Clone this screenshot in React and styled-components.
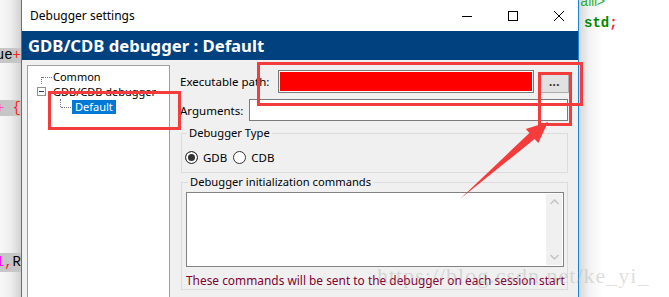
import React from 'react';
import styled, { createGlobalStyle } from 'styled-components';

const GlobalStyle = createGlobalStyle`
  html, body {
    margin: 0;
    padding: 0;
    background: #fff;
    overflow: hidden;
  }
  body {
    font-family: "Noto Sans", "Liberation Sans", sans-serif;
    color: #000;
  }
`;

const Screen = styled.div`
  position: relative;
  display: flex;
  width: 669px;
  height: 297px;
  overflow: hidden;
  background: #fff;
`;

/* editor behind the dialog */
const EditorStrip = styled.div`
  flex: none;
  width: ${p => p.$width}px;
  display: flex;
  flex-direction: column;
  overflow: hidden;
  font-family: "Liberation Mono", monospace;
  font-size: 14px;
  background: ${p => (p.$side === 'left'
    ? 'linear-gradient(to right, #f8f8f8 0%, #eeeeee 50%, #d2d2d2 100%)'
    : 'linear-gradient(to right, #d8d8d8 0px, #f2f2f2 10px, #fff 24px)')};
`;

const CodeLine = styled.div`
  flex: none;
  display: flex;
  justify-content: ${p => (p.$side === 'left' ? 'flex-end' : 'flex-start')};
  margin-top: ${p => p.$top}px;
  height: ${p => p.$h}px;
  line-height: ${p => p.$h}px;
  padding-left: ${p => p.$indent || 0}px;
  white-space: pre;
  overflow: hidden;
  background: ${p => (p.$marked ? '#c6c6c6' : 'transparent')};
`;

const Tok = styled.span`
  color: ${p => p.$c || '#000'};
  font-weight: ${p => (p.$bold ? 700 : 400)};
`;

/* dialog */
const Window = styled.div`
  flex: none;
  width: 558px;
  box-sizing: border-box;
  border-left: 1px solid #1883d7;
  border-right: 1px solid #1883d7;
  display: flex;
  flex-direction: column;
  background: #f0f0f0;
  overflow: hidden;
`;

const TitleBar = styled.div`
  flex: none;
  height: 31px;
  display: flex;
  align-items: center;
  background: #fff;
  padding-left: 8px;
`;

const TitleText = styled.div`
  flex: 1;
  font-size: 12px;
`;

const Controls = styled.div`
  display: flex;
  height: 100%;
  margin-right: -4px;
`;

const ControlButton = styled.div`
  width: 46px;
  height: 100%;
  display: flex;
  align-items: center;
  justify-content: center;
`;

const Header = styled.div`
  flex: none;
  height: 29px;
  display: flex;
  align-items: center;
  padding-left: 6px;
  background: #01417f;
  color: #fff;
  font-size: 16.7px;
  font-weight: 700;
`;

const Body = styled.div`
  flex: 1;
  display: flex;
  padding: 5px 10px 0 5px;
  min-height: 0;
`;

const TreePanel = styled.div`
  flex: none;
  width: 143px;
  box-sizing: border-box;
  margin-bottom: -6px;
  border: 1px solid #a0a0a0;
  background: #fff;
  padding: 3px 0 0 9px;
  font-size: 11px;
`;

const TreeRow = styled.div`
  display: flex;
  align-items: center;
  height: 15px;
  padding-left: ${p => p.$indent || 0}px;
`;

const Branch = styled.span`
  position: relative;
  flex: none;
  width: 16px;
  align-self: stretch;

  &::before {
    content: '';
    position: absolute;
    left: 4px;
    top: ${p => (p.$up ? '0' : '50%')};
    height: 50%;
    border-left: 1px dotted #777;
  }
  &::after {
    content: '';
    position: absolute;
    left: 5px;
    top: 50%;
    width: 10px;
    border-top: 1px dotted #777;
  }
`;

const ExpandBox = styled.span`
  flex: none;
  width: 9px;
  height: 9px;
  box-sizing: border-box;
  border: 1px solid #919191;
  display: flex;
  align-items: center;
  justify-content: center;
  margin-right: 7px;

  &::after {
    content: '';
    width: 5px;
    height: 1px;
    background: #1c3a7a;
  }
`;

const TreeLabel = styled.span`
  line-height: 14px;
  padding: 0 ${p => (p.$selected ? 3 : 0)}px;
  background: ${p => (p.$selected ? '#0078d7' : 'transparent')};
  color: ${p => (p.$selected ? '#fff' : '#000')};
`;

const Form = styled.div`
  flex: 1;
  margin-left: 10px;
  padding-top: 5px;
  display: flex;
  flex-direction: column;
  font-size: 11.5px;
`;

const FieldRow = styled.div`
  display: flex;
  align-items: center;
  height: ${p => p.$h}px;
  margin-top: ${p => p.$top || 0}px;
`;

const Label = styled.span`
  flex: none;
  width: ${p => p.$w}px;
`;

const TextInput = styled.div`
  flex: none;
  width: ${p => p.$w}px;
  height: 100%;
  box-sizing: border-box;
  border: 1px solid #7a7a7a;
  background: ${p => p.$fill || '#fff'};
  box-shadow: inset 0 0 0 1px #fff;
`;

const BrowseButton = styled.div`
  flex: none;
  align-self: flex-end;
  width: 29px;
  height: 21px;
  margin-left: 6px;
  box-sizing: border-box;
  border: 1px solid #adadad;
  background: #e1e1e1;
  display: flex;
  align-items: center;
  justify-content: center;
  font-weight: 700;
  letter-spacing: 0.5px;
  color: #3a2a10;
  padding-bottom: 3px;
`;

const Group = styled.fieldset`
  width: 387px;
  box-sizing: border-box;
  margin: ${p => p.$top}px 0 0 1px;
  padding: ${p => p.$pad};
  border: 1px solid #dcdcdc;
  min-inline-size: 0;
`;

const Legend = styled.legend`
  padding: 0 2px;
  margin-left: 2px;
  line-height: 14px;
  font-size: 11.2px;
`;

const RadioRow = styled.div`
  display: flex;
  align-items: center;
  height: 14px;
`;

const Radio = styled.span`
  flex: none;
  width: 13px;
  height: 13px;
  box-sizing: border-box;
  border-radius: 50%;
  border: 1px solid #333;
  background: ${p => (p.$checked ? '#333' : '#fff')};
  box-shadow: inset 0 0 0 2px #fff;
`;

const RadioText = styled.span`
  margin: 0 6px 0 5px;
`;

const CommandBox = styled.div`
  display: flex;
  width: 378px;
  height: 75px;
  box-sizing: border-box;
  border: 1px solid #828282;
  background: #fff;
  padding: 1px;
`;

const Scrollbar = styled.div`
  margin-left: auto;
  width: 16px;
  background: #f0f0f0;
  display: flex;
  flex-direction: column;
  align-items: center;
  justify-content: space-between;
  padding: 5px 0;
`;

const Hint = styled.div`
  margin-top: 6px;
  line-height: 14px;
  font-size: 11.9px;
  color: #800030;
  white-space: nowrap;
`;

/* annotations drawn over the screenshot */
const Overlay = styled.svg`
  position: absolute;
  left: 0;
  top: 0;
  pointer-events: none;
`;

const Watermark = styled.div`
  position: absolute;
  left: 377px;
  top: 263px;
  font-family: "Liberation Serif", serif;
  font-size: 22px;
  letter-spacing: 1px;
  color: rgba(160, 160, 160, 0.35);
  white-space: nowrap;
  pointer-events: none;
`;

const Chevron = ({ up }) => (
  <svg width="9" height="6" viewBox="0 0 9 6">
    <path d={up ? 'M0.5 5 L4.5 1 L8.5 5' : 'M0.5 1 L4.5 5 L8.5 1'} fill="none" stroke="#c2c2c2" strokeWidth="1.4" />
  </svg>
);

const App = () => {
  return (
    <Screen>
      <GlobalStyle />

      <EditorStrip $side="left" $width={21}>
        <CodeLine $side="left" $marked $top={48} $h={15}>
          <Tok>ue</Tok><Tok $c="#ff2020">+</Tok>
        </CodeLine>
        <CodeLine $side="left" $marked $top={37} $h={16}>
          <Tok $c="#ff55cc">+</Tok><Tok> </Tok><Tok $c="#ff2020">{'{'}</Tok>
        </CodeLine>
        <CodeLine $side="left" $marked $top={137} $h={19}>
          <Tok $c="#ff00ff">1</Tok><Tok $c="#ff2020">,</Tok><Tok>R</Tok>
        </CodeLine>
      </EditorStrip>

      <Window>
        <TitleBar>
          <TitleText>Debugger settings</TitleText>
          <Controls>
            <ControlButton>
              <svg width="10" height="10" viewBox="0 0 10 10">
                <path d="M0 5.5 H10" stroke="#000" strokeWidth="1" />
              </svg>
            </ControlButton>
            <ControlButton>
              <svg width="10" height="10" viewBox="0 0 10 10">
                <rect x="0.5" y="0.5" width="9" height="9" fill="none" stroke="#000" strokeWidth="1" />
              </svg>
            </ControlButton>
            <ControlButton>
              <svg width="10" height="10" viewBox="0 0 10 10">
                <path d="M0 0 L10 10 M10 0 L0 10" stroke="#000" strokeWidth="1" />
              </svg>
            </ControlButton>
          </Controls>
        </TitleBar>

        <Header>GDB/CDB debugger : Default</Header>

        <Body>
          <TreePanel>
            <TreeRow>
              <Branch />
              <TreeLabel>Common</TreeLabel>
            </TreeRow>
            <TreeRow>
              <ExpandBox />
              <TreeLabel>GDB/CDB debugger</TreeLabel>
            </TreeRow>
            <TreeRow $indent={19}>
              <Branch $up />
              <TreeLabel $selected>Default</TreeLabel>
            </TreeRow>
          </TreePanel>

          <Form>
            <FieldRow $h={23}>
              <Label $w={98}>Executable path:</Label>
              <TextInput $w={256} $fill="#ff0000" />
              <BrowseButton>...</BrowseButton>
            </FieldRow>
            <FieldRow $h={22} $top={6}>
              <Label $w={69}>Arguments:</Label>
              <TextInput $w={319} />
            </FieldRow>

            <Group $top={5} $pad="10px 3px 8px">
              <Legend>Debugger Type</Legend>
              <RadioRow>
                <Radio $checked />
                <RadioText>GDB</RadioText>
                <Radio />
                <RadioText>CDB</RadioText>
              </RadioRow>
            </Group>

            <Group $top={2} $pad="3px 4px 2px">
              <Legend>Debugger initialization commands</Legend>
              <CommandBox>
                <Scrollbar>
                  <Chevron up />
                  <Chevron />
                </Scrollbar>
              </CommandBox>
              <Hint>These commands will be sent to the debugger on each session start</Hint>
            </Group>
          </Form>
        </Body>
      </Window>

      <EditorStrip $side="right" $width={90}>
        <CodeLine $side="right" $top={-5} $h={15} $indent={1}>
          <Tok $c="#2fae2f">am&gt;</Tok>
        </CodeLine>
        <CodeLine $side="right" $top={6} $h={15} $indent={5}>
          <Tok $c="#008a00" $bold>std</Tok><Tok $c="#ff2020" $bold>;</Tok>
        </CodeLine>
      </EditorStrip>

      <Overlay width="669" height="297" viewBox="0 0 669 297">
        <g fill="none" stroke="#f43c3c" strokeWidth="3">
          <rect x="49.5" y="92.5" width="130" height="36" />
          <rect x="258.5" y="63.5" width="323" height="41" />
          <rect x="539.5" y="73.5" width="31" height="51" />
        </g>
        <polygon
          points="460,199 529.4,133 525.8,128.9 548,122 538.3,143.1 534.6,139"
          fill="#f43c3c"
        />
      </Overlay>

      <Watermark>https://blog.csdn.net/ke_yi_</Watermark>
    </Screen>
  );
};

export default App;
